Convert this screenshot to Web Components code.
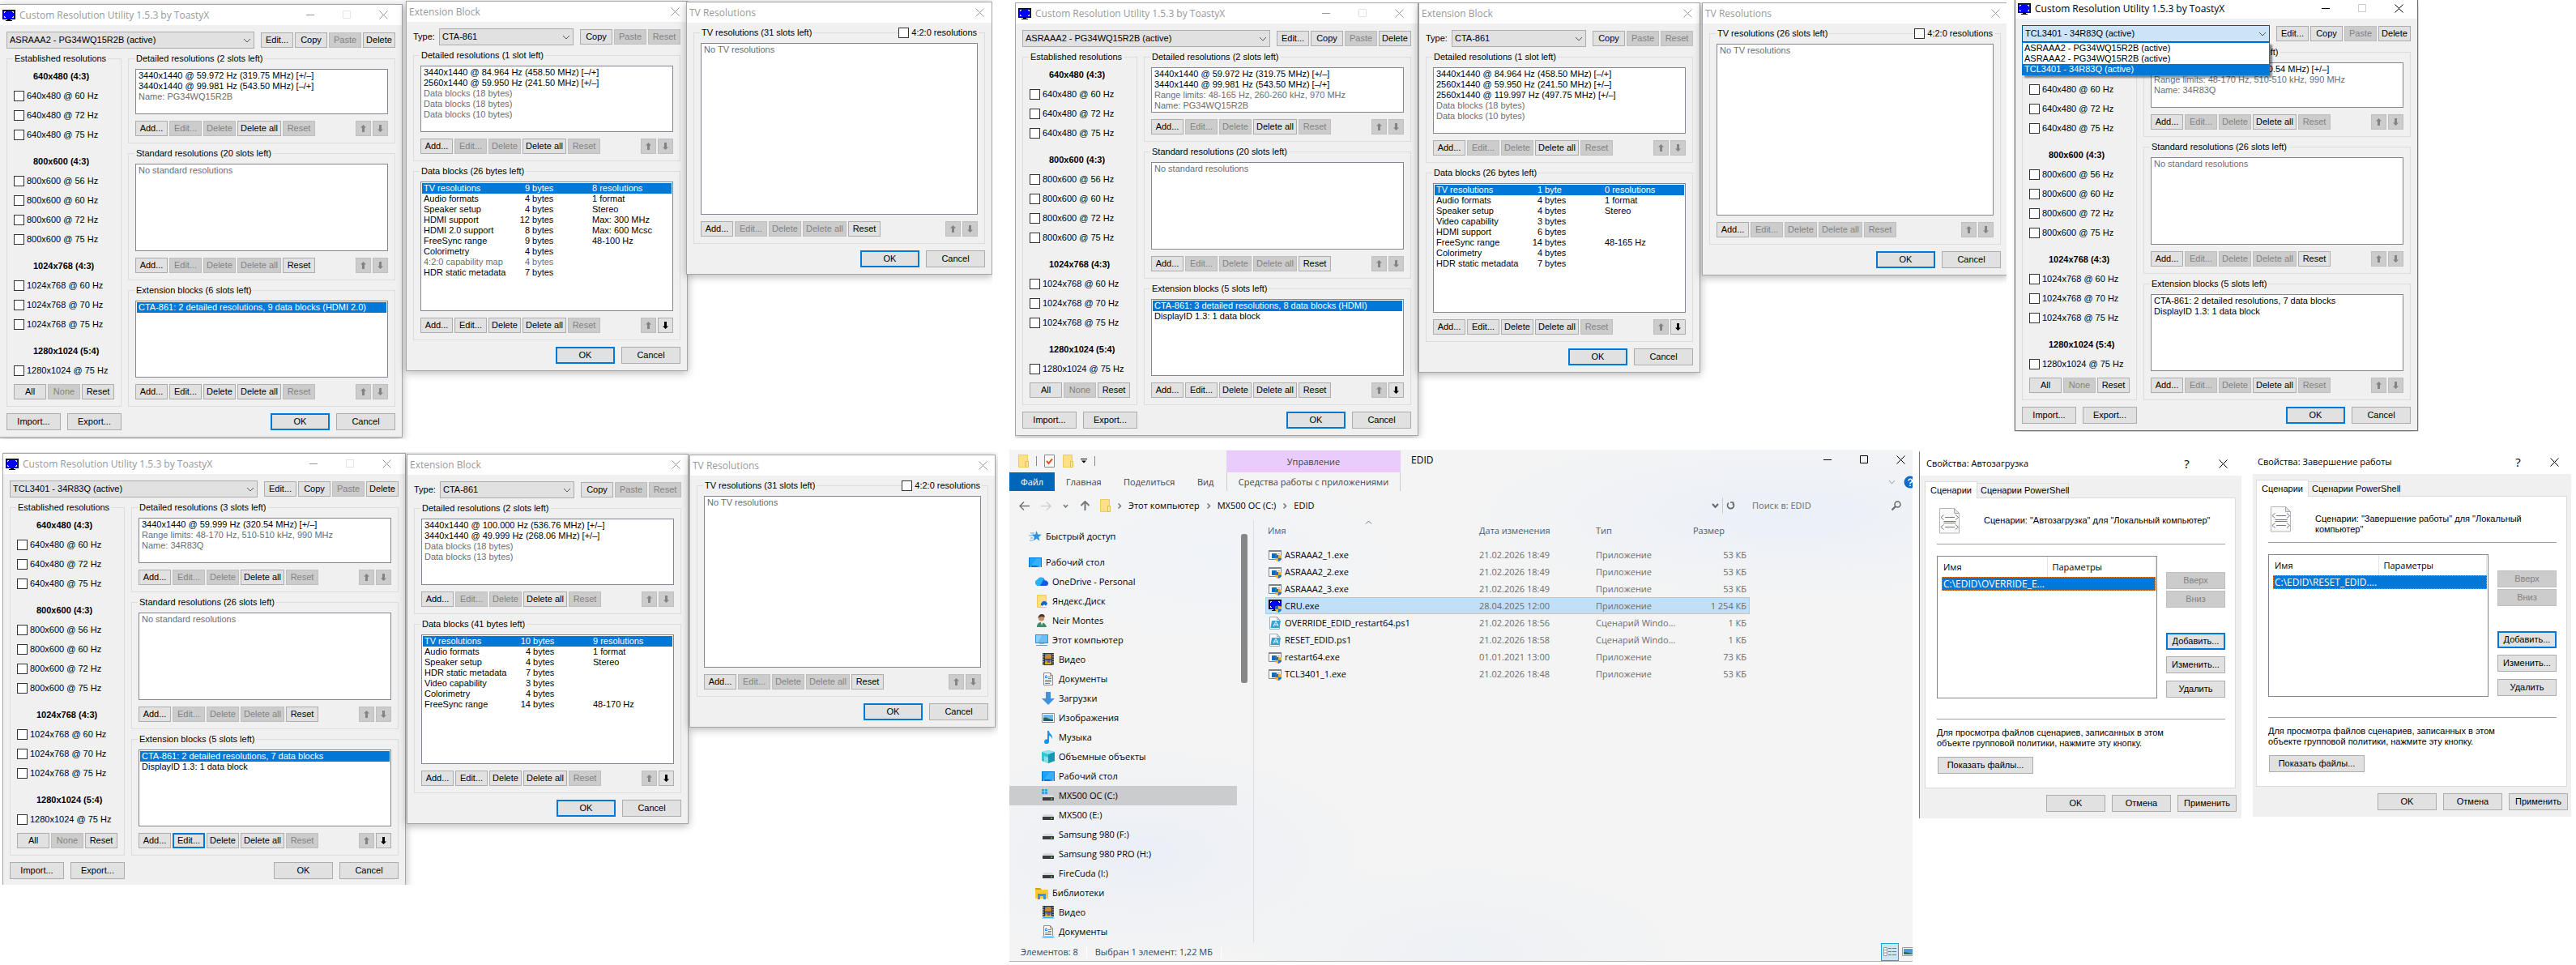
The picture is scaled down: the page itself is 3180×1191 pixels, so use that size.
<!DOCTYPE html>
<html lang="ru">
<head>
<meta charset="utf-8">
<title>CRU / EDID</title>
<style>
  html, body { margin: 0; height: 100%; background: #fff; }
  body { font: 11px/13px "Liberation Sans", sans-serif; color: #000; }
</style>
</head>
<body>
<desk-top></desk-top>
<script>
const BASE = `
  *, *::before, *::after { box-sizing: border-box; }
  svg { display: block; flex: none; }
  button, input, select { font: inherit; color: inherit; margin: 0; }
`;
const UI = '"Open Sans", "Noto Sans", sans-serif';

const define = (name, render) => customElements.define(name, class extends HTMLElement {
  connectedCallback() {
    if (this.shadowRoot) return;
    const root = this.attachShadow({ mode: 'open' });
    const t = document.createElement('template');
    const get = (k, d = '') => this.getAttribute(k) ?? d;
    t.innerHTML = render(get, this).replace('<style>', '<style>' + BASE);
    root.append(t.content.cloneNode(true));
  }
});

/* ---------- icons ---------- */
const svg = (w, h, body, extra = '') => `<svg width="${w}" height="${h}" viewBox="0 0 ${w} ${h}" ${extra} aria-hidden="true">${body}</svg>`;
const shield = `<path d="M12 7.500l4 1.200v3c0 2.200-1.800 3.600-4 4.300-2.200-.7-4-2.100-4-4.300v-3z" fill="#f5b32c"/><path d="M12 7.500v4.300H8V8.700zM12 11.800h4c-.1 2.100-1.900 3.500-4 4.200z" fill="#1b6ec2"/>`;
const monitor = `<path d="M0 0h16v12H0z" fill="#000"/><path d="M1 1h14v10H1z" fill="#00f"/><path d="M2.500 4V2.500H4M12 2.500h1.500V4M2.500 8v1.500H4M12 9.500h1.500V8" fill="none" stroke="#fff"/><path d="M6 12h4v1h2v1H4v-1h2z" fill="#000"/>`;
const drive = `<path d="M3 7h10l2 3H1z" fill="#d9d9d9"/><path d="M1 10h14v4H1z" fill="#3c3c3c"/><path d="M11.500 11.500h1.500v1.500h-1.500z" fill="#3f4"/>`;
const film = `<path d="M1 0h14v15H1z" fill="#333"/><path d="M4 1h8v6H4zM4 8h8v6H4z" fill="#4a86c8"/><path d="M4 4l4-3 4 2v4H4z" fill="#c98b2d"/><path d="M4 11l5-2 3 3v2H4z" fill="#d8a62a"/><path d="M7 8h3v4H7z" fill="#7a4da0"/><path d="M2 1v14M14 1v14" stroke="#eee" stroke-width="1" stroke-dasharray="1.500 1.500"/>`;
const doc = `<path d="M2.500.5h8l3 3v12h-11z" fill="#fff" stroke="#8c8c8c"/><path d="M10.500.5v3h3" fill="none" stroke="#8c8c8c"/><path d="M4 6.500h3M8 5.500h4M8 7.500h4M4 9.500h8M4 11.500h8M4 13.500h6" stroke="#2f8fc8"/><path d="M4 6l1.500-3L7 6" fill="none" stroke="#2f8fc8"/>`;
const lib = `<path d="M1 13h14l1 3H0z" fill="#9bdcf8"/><path d="M2 14h12v1H2z" fill="#3db2ec"/>`;
const folder = `<path d="M1 0h11.500v16H1z" fill="#ffe08a"/><path d="M1.500.5h11v15h-11z" fill="none" stroke="#eccb5c"/><path d="M10.500 8.500h3v7h-3z" fill="#ffe9a6" stroke="#e3bd4a"/>`;
const desk = `<path d="M0 2h16v12H0z" fill="#0078d7"/><path d="M1 3h14v9H1z" fill="#1ba1f5"/><path d="M9 3h6v9H3z" fill="#36b0fa"/><path d="M2 13h1M11 13h1M13 13h2" stroke="#fff"/>`;
const ICONS = {
  cru: svg(16, 14, monitor),
  folder: svg(14, 16, folder),
  star: svg(16, 16, `<path d="M9.500 1l1.700 4.500 4.800.3-3.800 3 1.300 4.700-4-2.700-4 2.700 1.400-4.700L3.500 5.800l4.600-.3z" fill="#2a94e0"/><path d="M2 4h5M0 7h5M2 10h3M1 13h4" stroke="#5cb0ea"/>`),
  desk: svg(16, 16, desk),
  cloud: svg(16, 16, `<path d="M4 13a4 4 0 0 1-1-7.800A5 5 0 0 1 12 6z" fill="#1379e0"/><path d="M3 5.200A5 5 0 0 1 11 4L5 13H4a4 4 0 0 1-1-7.800z" fill="#27b3f7"/><path d="M5 13l5-6a3.800 3.800 0 0 1 6 3 3 3 0 0 1-3 3z" fill="#1457e6"/>`),
  yandex: svg(16, 16, `<path d="M2.500.5h11v15h-11z" fill="#ffdf84" stroke="#eccb5c"/><path d="M7 15V9h8v6z" fill="#fff"/><path d="M7 13a4 4 0 0 1 8-2l-2 3c-1-2-3-2-4 0z" fill="#1466d6"/>`),
  user: svg(16, 16, `<path d="M2 16c0-4 2-6 5-6s6 2 7 6z" fill="#3f8a6b"/><path d="M7 10l1 4 1.500-4z" fill="#fff"/><circle cx="7.500" cy="5" r="3.600" fill="#c98f67"/><path d="M3.500 5c0-3 2-5 4.500-5 3 0 4 2 3.500 4-2-1-4-1.500-6-.5z" fill="#4a3527"/>`),
  pc: svg(16, 16, `<path d="M0 1h16v11H0z" fill="#2d8fd8"/><path d="M1 2h14v9H1z" fill="#8bd0fa"/><path d="M8 2h7v9H3z" fill="#6abff5"/><path d="M5 12h6v1H5z" fill="#8ba"/><path d="M1 14.500h14" stroke="#7d95a8"/>`),
  video: svg(16, 16, film),
  videolib: svg(16, 16, film + lib),
  doc: svg(16, 16, doc),
  doclib: svg(16, 16, doc + lib),
  down: svg(16, 16, `<path d="M5 0h6v8h5l-8 8-8-8h5z" fill="#3c93e0"/>`),
  pic: svg(16, 16, `<path d="M.5 2.500h15v11H.5z" fill="#fff" stroke="#8c8c8c"/><path d="M2 4h12v8H2z" fill="#6cb8ea"/><path d="M2 8c4-2 6 2 12 2v2H2z" fill="#2a5a66"/>`),
  music: svg(16, 16, `<path d="M7 0h2c0 4 5 4 4 10-1-3-2-3.500-4-4v7a3 3 0 1 1-2-2.500z" fill="#1a94ea"/>`),
  cube: svg(16, 16, `<path d="M0 2l8-2 8 2v11l-8 3-8-3z" fill="#37c4d4"/><path d="M8 5l8-3v11l-8 3z" fill="#1597ad"/><path d="M0 2l8-2 8 2-8 3z" fill="#8be6ee"/><path d="M3 7l5 2v7l-5-2z" fill="#8edfe8"/>`),
  drive: svg(16, 16, drive),
  drivewin: svg(16, 16, drive + `<path d="M0 0h3v2.500H0zM3.800 0H7v2.500H3.800zM0 3.300h3V6H0zM3.800 3.300H7V6H3.800z" fill="#18a7ee"/>`),
  libs: svg(16, 16, `<path d="M0 2h6l2 2h8v11H0z" fill="#ffc83d"/><path d="M0 2h6l2 2H0z" fill="#e09b12"/><path d="M3 9h10v7h-3v-4H6v4H3z" fill="#3c93e0"/>`),
  exe: svg(16, 16, `<path d="M.5 2.500h15v11H.5z" fill="#fff" stroke="#7d858c"/><path d="M0 2h16v2H0z" fill="#7d858c"/><path d="M4 6h6v6H4z" fill="#0c6cc4"/><path d="M11 6.500h3M11 8.500h3" stroke="#9aa"/>${shield}`),
  cruexe: svg(16, 16, monitor + shield),
  ps1: svg(16, 16, `<path d="M1.500.5h9l3 3v12h-12z" fill="#fbfdff" stroke="#9fb0bd"/><path d="M10.500.5v3h3" fill="none" stroke="#9fb0bd"/><path d="M4 5h11l-1.500 9h-11z" fill="#3aa3d6"/><path d="M6 12l3-6 3 6M6.500 10h5" fill="none" stroke="#e6f7ff"/>`),
  task: svg(13, 16, `<path d="M.5.500h12v15H.5z" fill="#fff" stroke="#8a8a8a"/><path d="M3 8l2.500 3L10 5.500" fill="none" stroke="#e2521c" stroke-width="2"/>`),
};
const chevron = (w, h, c, sw = 1) => svg(w, h, `<path d="M1 1l${w / 2 - 1} ${h - 2}L${w - 1} 1" fill="none" stroke="${c}" stroke-width="${sw}"/>`);
const cross = c => svg(11, 11, `<path d="M.5.500l10 10M10.500.500l-10 10" stroke="${c}"/>`);
const dash = c => svg(11, 11, `<path d="M0 5.500h10" stroke="${c}"/>`);
const square = c => svg(11, 11, `<path d="M.5.500h9v9h-9z" fill="none" stroke="${c}"/>`);
const arrow = dir => svg(7, 9, `<path d="${dir === 'up' ? 'M3.500 0L7 3.500H5V9H2V3.500H0z' : 'M3.500 9L7 5.500H5V0H2v5.500H0z'}" fill="currentColor"/>`);

/* ---------- controls ---------- */
define('push-button', (a, el) => `
<style>
  :host { display: block; width: ${a('w', '40')}px; }
  button { display: grid; place-items: center; width: 100%; height: ${a('h', '19')}px; padding: 0;
    border: 1px solid #adadad; background: #e1e1e1; color: #000; white-space: nowrap; }
  button:disabled { border-color: #bfbfbf; background: #ccc; color: #838383; }
  button.focus { border: 2px solid #0078d7; }
</style>
<button type="button" ${el.hasAttribute('off') ? 'disabled' : ''} ${el.hasAttribute('focus') ? 'class="focus"' : ''} ${a('arrow') ? `aria-label="${a('arrow')}"` : ''}>${a('arrow') ? arrow(a('arrow')) : '<slot></slot>'}</button>`);

/* A leading "-" disables a button, "*" gives it the focus ring. */
const btns = (spec, h = 19, w = 40) => spec.split(',').map(s => {
  const off = s[0] === '-', focus = s[0] === '*';
  const t = off || focus ? s.slice(1) : s;
  const dir = t === '^' ? 'up' : t === 'v' ? 'down' : '';
  return `<push-button h="${h}" w="${dir ? 19 : t === 'Delete all' ? 54 : w}" ${off ? 'off' : ''} ${focus ? 'focus' : ''} ${dir ? `arrow="${dir}"` : ''}>${dir ? '' : t}</push-button>`;
}).join('');

define('tool-row', a => `
<style>:host { display: flex; justify-content: space-between; } div { display: flex; gap: 2px; }</style>
<div>${btns(a('left'))}</div><div>${a('right') ? btns(a('right')) : ''}</div>`);

define('check-box', a => `
<style>
  :host { display: block; }
  label { display: flex; align-items: center; gap: 3px; white-space: nowrap; }
  input { appearance: none; width: 13px; height: 13px; border: 1px solid #333; background: #fff; }
</style>
<label><input type="checkbox"><span><slot></slot></span></label>`);

define('combo-box', (a, el) => {
  const open = el.hasAttribute('open');
  const opts = a('options', a('value')).split('|');
  return `
<style>
  :host { display: block; position: relative; z-index: ${open ? 5 : 'auto'}; }
  .box { display: grid; align-items: center; }
  .box > * { grid-area: 1 / 1; }
  select { appearance: none; width: 100%; height: 21px; padding: 0 20px 0 3px; border: 1px solid ${open ? '#005499' : '#adadad'};
    border-radius: 0; background: ${open ? '#cce4f7' : '#e1e1e1'}; color: #000; }
  svg { justify-self: end; margin-right: 4px; pointer-events: none; }
  ul { position: absolute; top: 21px; left: 0; right: 0; margin: 0; padding: 0; list-style: none; border: 1px solid #0078d7;
    background: #fff; box-shadow: 3px 3px 2px rgba(0,0,0,.45); }
  li { padding: 0 2px; }
  li.on { background: #0078d7; color: #fff; }
</style>
<div class="box"><select aria-label="${a('label')}"><option>${a('value')}</option></select>${chevron(10, 6, '#555')}</div>
${open ? `<ul role="listbox">${opts.map((o, i) => `<li role="option" class="${i === opts.length - 1 ? 'on' : ''}">${o}</li>`).join('')}</ul>` : ''}`;
});

define('group-box', (a, el) => `
<style>
  :host { display: block; }
  fieldset { height: 100%; min-width: 0; margin: 0; padding: ${a('pad', '6')}px 8px 8px; border: 1px solid #dcdcdc; }
  legend { margin-left: -1px; padding: 0 2px; white-space: nowrap; visibility: ${el.hasAttribute('covered') ? 'hidden' : 'visible'}; }
  .in { display: flex; flex-direction: column; gap: 8px; }
</style>
<fieldset><legend>${a('caption')}</legend><div class="in"><slot></slot></div></fieldset>`);

/* Rows: "~" greys a row, ">" selects it. Columns are split by "/|". */
define('list-box', a => {
  const rows = a('rows').split(';;');
  const cls = r => r[0] === '~' ? 'dim' : r[0] === '>' ? 'on' : '';
  const txt = r => /^[~>]/.test(r) ? r.slice(1) : r;
  const data = rows[0].includes('/|');
  const body = data
    ? `<table><colgroup><col class="c1"><col class="c2"><col></colgroup>${rows.map(r => {
        const [n, b, v] = txt(r).split('/|');
        const [num, unit] = b.split(' ');
        return `<tr class="${cls(r)}"><td>${n}</td><td><span class="n">${num}</span> ${unit}</td><td>${v || ''}</td></tr>`;
      }).join('')}</table>`
    : `<ul role="listbox">${rows.map(r => `<li role="option" class="${cls(r)}">${txt(r)}</li>`).join('')}</ul>`;
  return `
<style>
  :host { display: block; height: ${a('h')}px; padding: 1px; border: 1px solid #828790; background: #fff; }
  ul { margin: 0; padding: 0; list-style: none; }
  li { height: 13px; padding: 0 2px; white-space: nowrap; }
  table { width: 100%; table-layout: fixed; border-collapse: collapse; }
  td { height: 13px; padding: 0 2px; white-space: nowrap; }
  .c1 { width: 117px; } .c2 { width: 91px; }
  .n { display: inline-block; min-width: 14px; text-align: right; }
  .dim { color: #6d6d6d; }
  .on { background: #0078d7; color: #fff; }
</style>${body}`;
});

define('win-frame', (a, el) => {
  const active = el.hasAttribute('active'), c = active ? '#000' : '#999', full = a('kind') === 'main';
  return `
<style>
  :host { display: block; position: absolute; border: 1px solid ${active ? '#6f6f6f' : '#a5a5a5'}; background: #f0f0f0;
    box-shadow: 0 2px 10px rgba(0,0,0,.3); }
  header { display: flex; align-items: center; height: 25px; padding-left: 3px; background: #fff; color: ${c};
    font: 12px/16px ${UI}; }
  header > svg { margin-right: 5px; }
  h1 { flex: 1; margin: 0; font: inherit; white-space: nowrap; }
  header button { display: grid; place-items: center; width: ${full ? 45 : 29}px; height: 25px; padding: 0; border: 0; background: none; }
  .body { display: flex; flex-direction: column; gap: 8px; padding: ${a('top', '8')}px 8px 8px; }
</style>
<header>${full ? ICONS.cru : ''}<h1>${a('caption')}</h1>
${full ? `<button aria-label="Minimize">${dash(c)}</button><button aria-label="Maximize">${square(active ? '#ccc' : '#e4e4e4')}</button>` : ''}<button aria-label="Close">${cross(c)}</button></header>
<div class="body"><slot></slot></div>`;
});

/* ---------- application windows ---------- */
const GROUPS = [['640x480 (4:3)', ['640x480 @ 60 Hz', '640x480 @ 72 Hz', '640x480 @ 75 Hz']],
  ['800x600 (4:3)', ['800x600 @ 56 Hz', '800x600 @ 60 Hz', '800x600 @ 72 Hz', '800x600 @ 75 Hz']],
  ['1024x768 (4:3)', ['1024x768 @ 60 Hz', '1024x768 @ 70 Hz', '1024x768 @ 75 Hz']],
  ['1280x1024 (5:4)', ['1280x1024 @ 75 Hz']]];

define('cru-main', (a, el) => `
<style>
  :host { position: absolute; width: 498px; }
  win-frame { width: 100%; }
  .top { display: flex; align-items: center; gap: 8px; }
  .top combo-box { flex: 1; }
  .set { display: flex; gap: 2px; }
  .cols { display: grid; grid-template-columns: 142px 1fr; column-gap: 8px; margin-top: -2px; }
  .right { display: flex; flex-direction: column; gap: 6px; }
  .grp { display: grid; grid-auto-rows: 24px; align-items: center; }
  .grp + .grp { margin-top: 1px; }
  h2 { margin: 0 0 0 24px; font: bold 11px/13px "Liberation Sans", sans-serif; }
  .covered h2 { visibility: hidden; }
  .est { margin-top: -3px; }
  .end { display: flex; justify-content: space-between; }
  .end div { display: flex; gap: 8px; }
</style>
<win-frame kind="main" caption="Custom Resolution Utility 1.5.3 by ToastyX" ${el.hasAttribute('active') ? 'active' : ''}>
  <div class="top"><combo-box label="Display" value="${a('display')}" ${a('options') ? `open options="${a('options')}"` : ''}></combo-box><div class="set">${btns('Edit...,Copy,-Paste,Delete')}</div></div>
  <div class="cols">
    <group-box caption="Established resolutions" pad="3" ${a('options') ? 'covered' : ''}>
      ${GROUPS.map(([h, l], i) => `<div class="grp ${a('options') && !i ? 'covered' : ''}"><h2>${h}</h2>${l.map(x => `<check-box>${x}</check-box>`).join('')}</div>`).join('')}
      <tool-row class="est" left="All,-None,Reset"></tool-row>
    </group-box>
    <div class="right">
      <group-box caption="Detailed resolutions (${a('dslots')})"><list-box h="56" rows="${a('detailed')}"></list-box><tool-row left="Add...,-Edit...,-Delete,Delete all,-Reset" right="-^,-v"></tool-row></group-box>
      <group-box caption="Standard resolutions (${a('sslots')})"><list-box h="108" rows="~No standard resolutions"></list-box><tool-row left="Add...,-Edit...,-Delete,-Delete all,Reset" right="-^,-v"></tool-row></group-box>
      <group-box caption="Extension blocks (${a('eslots')})"><list-box h="95" rows="${a('ext')}"></list-box><tool-row left="${a('ebtn')}" right="${a('earr')}"></tool-row></group-box>
    </div>
  </div>
  <div class="end"><div>${btns('Import...,Export...', 21, 67)}</div><div>${btns(a('ok', '*OK') + ',Cancel', 21, 73)}</div></div>
</win-frame>`);

define('cru-extension', a => `
<style>
  :host { position: absolute; width: 348px; }
  win-frame { width: 100%; }
  .top { display: flex; align-items: center; }
  .top span { width: 32px; }
  .top combo-box { flex: 1; margin-right: 8px; }
  .set { display: flex; gap: 2px; }
  .stack { display: flex; flex-direction: column; gap: 6px; margin-top: -2px; }
  .end { display: flex; justify-content: flex-end; gap: 8px; }
</style>
<win-frame caption="Extension Block">
  <div class="top"><span>Type:</span><combo-box label="Type" value="CTA-861"></combo-box><div class="set">${btns('Copy,-Paste,-Reset')}</div></div>
  <div class="stack">
    <group-box caption="Detailed resolutions (${a('dslots')})"><list-box h="82" rows="${a('detailed')}"></list-box><tool-row left="Add...,-Edit...,-Delete,Delete all,-Reset" right="-^,-v"></tool-row></group-box>
    <group-box caption="Data blocks (${a('bytes')} bytes left)"><list-box h="160" rows="${a('data')}"></list-box><tool-row left="Add...,Edit...,Delete,Delete all,-Reset" right="-^,v"></tool-row></group-box>
  </div>
  <div class="end">${btns('*OK,Cancel', 21, 73)}</div>
</win-frame>`);

define('cru-tv', a => `
<style>
  :host { position: absolute; width: 378px; }
  win-frame { width: 100%; }
  .g { position: relative; }
  check-box { position: absolute; top: 0; right: 8px; padding-right: 2px; background: #f0f0f0; }
  .end { display: flex; justify-content: flex-end; gap: 8px; }
</style>
<win-frame caption="TV Resolutions" top="6">
  <div class="g"><group-box caption="TV resolutions (${a('slots')} slots left)"><list-box h="212" rows="~No TV resolutions"></list-box><tool-row left="Add...,-Edit...,-Delete,-Delete all,${a('reset')}" right="-^,-v"></tool-row></group-box>
  <check-box>4:2:0 resolutions</check-box></div>
  <div class="end">${btns('*OK,Cancel', 21, 73)}</div>
</win-frame>`);

/* ---------- file explorer ---------- */
const TREE = [[0, 'star', 'Быстрый доступ'], [0, 'desk', 'Рабочий стол'], [1, 'cloud', 'OneDrive - Personal'], [1, 'yandex', 'Яндекс.Диск'],
  [1, 'user', 'Neir Montes'], [1, 'pc', 'Этот компьютер'], [2, 'video', 'Видео'], [2, 'doc', 'Документы'], [2, 'down', 'Загрузки'],
  [2, 'pic', 'Изображения'], [2, 'music', 'Музыка'], [2, 'cube', 'Объемные объекты'], [2, 'desk', 'Рабочий стол'],
  [2, 'drivewin', 'MX500 ОС (C:)', 'on'], [2, 'drive', 'MX500 (E:)'], [2, 'drive', 'Samsung 980 (F:)'], [2, 'drive', 'Samsung 980 PRO (H:)'],
  [2, 'drive', 'FireCuda (I:)'], [1, 'libs', 'Библиотеки'], [2, 'videolib', 'Видео'], [2, 'doclib', 'Документы']];
define('explorer-tree', () => `
<style>
  :host { display: flex; width: 301px; flex: none; overflow: hidden; }
  ul { flex: 1; margin: 0; padding: 8px 0 0; list-style: none; }
  a { display: flex; align-items: center; gap: 5px; height: 24px; color: #000; text-decoration: none; white-space: nowrap; }
  .l0 { padding-left: 24px; } .l1 { padding-left: 32px; } .l2 { padding-left: 40px; }
  li:first-child { margin-bottom: 8px; }
  .on { background: #cbcccd; }
  .bar { width: 20px; padding: 17px 7px 0 5px; }
  .bar div { height: 184px; border-radius: 3px; background: #868686; }
</style>
<ul>${TREE.map(([l, i, t, on]) => `<li><a href="#" class="l${l} ${on || ''}">${ICONS[i]}<span>${t}</span></a></li>`).join('')}</ul>
<div class="bar"><div></div></div>`);

const FILES = [['exe', 'ASRAAA2_1.exe', '21.02.2026 18:49', 'Приложение', '53 КБ'], ['exe', 'ASRAAA2_2.exe', '21.02.2026 18:49', 'Приложение', '53 КБ'],
  ['exe', 'ASRAAA2_3.exe', '21.02.2026 18:49', 'Приложение', '53 КБ'], ['cruexe', 'CRU.exe', '28.04.2025 12:00', 'Приложение', '1 254 КБ'],
  ['ps1', 'OVERRIDE_EDID_restart64.ps1', '21.02.2026 18:56', 'Сценарий Windo...', '1 КБ'], ['ps1', 'RESET_EDID.ps1', '21.02.2026 18:58', 'Сценарий Windo...', '1 КБ'],
  ['exe', 'restart64.exe', '01.01.2021 13:00', 'Приложение', '73 КБ'], ['exe', 'TCL3401_1.exe', '21.02.2026 18:48', 'Приложение', '53 КБ']];
define('explorer-files', () => `
<style>
  :host { display: block; flex: 1; padding-left: 14px; border-left: 1px solid #dcdde0; }
  table { width: 598px; table-layout: fixed; border-collapse: collapse; color: #6d6d6d; }
  th { height: 32px; padding: 0 3px; text-align: left; vertical-align: top; font-weight: 400; line-height: 26px; color: #4c607a; position: relative; }
  th svg { position: absolute; left: 123px; top: 0; }
  td { height: 21px; padding: 0; white-space: nowrap; }
  td:first-child { padding-left: 4px; color: #000; }
  td:last-child { padding-right: 4px; text-align: right; }
  th:not(:first-child) { padding-left: 0; }
  td div { display: flex; align-items: center; gap: 4px; }
  .on { background: #c3dff5; outline: 1px solid #99d1ff; outline-offset: -1px; }
  .a { width: 264px; } .b { width: 144px; } .c { width: 120px; }
</style>
<table><colgroup><col class="a"><col class="b"><col class="c"><col></colgroup>
<thead><tr><th>Имя${svg(9, 5, '<path d="M1 4.500L4.500 1 8 4.500" fill="none" stroke="#777"/>')}</th><th>Дата изменения</th><th>Тип</th><th>Размер</th></tr></thead>
<tbody>${FILES.map(f => `<tr class="${f[0] === 'cruexe' ? 'on' : ''}"><td><div>${ICONS[f[0]]}<span>${f[1]}</span></div></td><td>${f[2]}</td><td>${f[3]}</td><td>${f[4]}</td></tr>`).join('')}</tbody></table>`);

const crumbSep = svg(6, 9, '<path d="M1.500 1.500l3 3-3 3" fill="none" stroke="#777" stroke-width="1.500"/>');
define('file-explorer', () => `
<style>
  :host { display: flex; flex-direction: column; position: absolute; width: 1115px; height: 632px; overflow: hidden;
    font: 11px/16px ${UI}; border-bottom: 1px solid #b5b5b5;
    background: radial-gradient(ellipse 420px 110px at 960px 80px, #ebf0f8, transparent), radial-gradient(ellipse 300px 140px at 160px 500px, #ebeff6, transparent),
      radial-gradient(ellipse 260px 120px at 250px 130px, #f0f3f8, transparent), radial-gradient(ellipse 300px 120px at 560px 620px, #eef1f5, transparent), #f4f4f4; }
  button { display: grid; place-items: center; padding: 0; border: 0; background: none; }
  .title { display: flex; height: 28px; margin-right: -8px; }
  .quick { display: flex; align-items: center; gap: 9px; width: 268px; padding-left: 10px; }
  .quick i { width: 1px; height: 12px; background: #888; }
  .ctx { width: 215px; margin-top: 1px; background: #e9ccfc; color: #444; text-align: center; line-height: 27px; }
  .title h1 { flex: 1; margin: 0; padding-left: 13px; font: 12px/25px ${UI}; }
  .title .w { width: 45px; height: 25px; }
  .tabs { display: flex; height: 23px; line-height: 23px; color: #444; white-space: nowrap; }
  .tabs a { color: inherit; text-decoration: none; }
  .file { width: 56px; margin-right: 14px; background: #0067b8; text-align: center; }
  .tabs .file { color: #fff; }
  .t2 { width: 71px; } .t3 { width: 91px; } .t4 { width: 36px; }
  .t5 { width: 215px; text-align: center; border: solid #ccc; border-width: 0 1px; }
  .rest { display: flex; flex: 1; justify-content: flex-end; align-items: center; gap: 10px; }
  .q { width: 11px; height: 16px; overflow: hidden; }
  .addr { display: flex; align-items: center; height: 36px; padding-left: 12px; white-space: nowrap; }
  .nav { display: flex; align-items: center; width: 88px; justify-content: space-between; margin-right: 11px; }
  .crumbs { display: flex; align-items: center; gap: 8px; flex: 1; }
  .crumbs a { color: #000; text-decoration: none; }
  .go { display: flex; align-items: center; gap: 4px; width: 50px; }
  .go i { width: 1px; height: 20px; background: #ccc; }
  .search { display: flex; align-items: center; width: 198px; padding-right: 14px; }
  .search input { flex: 1; min-width: 0; padding: 0; border: 0; background: none; outline: 0; }
  .search input::placeholder { color: #6d6d6d; }
  .main { display: flex; flex: 1; min-height: 0; }
  .status { display: flex; align-items: center; height: 23px; padding-left: 14px; color: #2d4669; }
  .status span { padding-right: 10px; margin-right: 10px; border-right: 1px solid #fff; }
  .view { display: flex; gap: 4px; margin-left: auto; align-items: center; }
  .view b { display: grid; place-items: center; width: 22px; height: 22px; border: 1px solid #26a0da; background: #cbe5f3; }
</style>
<div class="title"><div class="quick">${ICONS.folder}<i></i>${ICONS.task}${ICONS.folder}${svg(8, 6, '<path d="M0 .5h8" stroke="#000"/><path d="M1 2.500h6L4 5.500z"/>')}<i></i></div>
  <div class="ctx">Управление</div><h1>EDID</h1>
  <button class="w" aria-label="Свернуть">${dash('#000')}</button><button class="w" aria-label="Развернуть">${square('#000')}</button><button class="w" aria-label="Закрыть">${cross('#000')}</button></div>
<nav class="tabs"><a class="file" href="#">Файл</a><a class="t2" href="#">Главная</a><a class="t3" href="#">Поделиться</a><a class="t4" href="#">Вид</a><a class="t5" href="#">Средства работы с приложениями</a>
  <div class="rest">${chevron(9, 6, '#999')}<div class="q">${svg(16, 16, '<circle cx="8" cy="8" r="7.500" fill="#0f6cc9"/><path d="M6 6.500a2.200 2.200 0 1 1 3 2c-.8.300-1 .7-1 1.500M8 11.500v1.500" fill="none" stroke="#fff" stroke-width="1.600"/>')}</div></div></nav>
<div class="addr"><div class="nav">
  <button aria-label="Назад">${svg(13, 11, '<path d="M6 .5l-5 5 5 5M1 5.500h12" fill="none" stroke="#767676" stroke-width="1.500"/>')}</button>
  <button aria-label="Вперёд">${svg(13, 11, '<path d="M7 .5l5 5-5 5M12 5.500H0" fill="none" stroke="#d0d0d0" stroke-width="1.500"/>')}</button>
  <button aria-label="Недавние">${chevron(7, 5, '#777', 1.5)}</button>
  <button aria-label="Вверх">${svg(13, 12, '<path d="M1.500 6l5-5 5 5M6.500 1v11" fill="none" stroke="#777" stroke-width="2"/>')}</button></div>
  <div class="crumbs">${ICONS.folder}${crumbSep}<a href="#">Этот компьютер</a>${crumbSep}<a href="#">MX500 ОС (C:)</a>${crumbSep}<a href="#">EDID</a></div>
  <div class="go"><button aria-label="История">${chevron(9, 6, '#666', 2)}</button><i></i><button aria-label="Обновить">${svg(11, 12, '<path d="M3 2.500a4 4 0 1 0 5 0M8.500 5.500v-3.500h-3.500" fill="none" stroke="#666" stroke-width="1.600"/>')}</button></div>
  <div class="search"><input aria-label="Поиск" placeholder="Поиск в: EDID">${svg(12, 12, '<circle cx="7.500" cy="4.500" r="3.500" fill="none" stroke="#666" stroke-width="1.500"/><path d="M5 7L.5 11.500" stroke="#666" stroke-width="2"/>')}</div></div>
<div class="main"><explorer-tree></explorer-tree><explorer-files></explorer-files></div>
<div class="status"><span>Элементов: 8</span><span>Выбран 1 элемент: 1,22 МБ</span>
  <div class="view"><b>${svg(16, 11, '<path d="M.5.500h4v10h-4zM.5 3.500h4M.5 7h4" fill="#fff" stroke="#999"/><path d="M6 1.500h4M11 1.500h5M6 5.500h4M11 5.500h5M6 9.500h4M11 9.500h5" stroke="#777"/>')}</b>
  ${svg(13, 11, '<path d="M.5.500h16v10H.5z" fill="#fff" stroke="#999"/><path d="M2 2h11v7H2z" fill="#4b9be0"/><path d="M2 6c4 0 6 1 11 2v1H2z" fill="#2e6a54"/>')}</div></div>`);

/* ---------- script properties ---------- */
define('script-props', a => `
<style>
  :host { display: block; position: absolute; width: 398px; border-left: 1px solid #777; background: #f0f0f0; }
  header { display: flex; align-items: center; height: 30px; padding-left: 8px; background: #fff; font: 11px/16px ${UI}; }
  h1 { flex: 1; margin: 0; font: inherit; }
  header button { display: grid; place-items: center; width: 45px; padding: 0; border: 0; background: none; font-size: 15px; }
  .body { padding: 7px 6px 8px; }
  .tabs { display: flex; align-items: flex-end; height: 20px; }
  .tabs button { height: 18px; padding: 0 4px; border: 1px solid #dcdcdc; border-width: 1px 1px 0 0; background: #f0f0f0; width: 113px; white-space: nowrap; }
  .tabs .cur { position: relative; width: 65px; height: 21px; margin-bottom: -1px; border-left-width: 1px; background: #fff; }
  .panel { width: 384px; height: 359px; padding: 12px 12px 0 14px; border: 1px solid #dcdcdc; background: #fff; }
  .head { display: flex; gap: 29px; height: 44px; padding-left: 3px; }
  .head p { margin: 9px 0 0; width: 290px; }
  hr { height: 1px; margin: 0; border: 0; background: #a0a0a0; }
  .mid { display: flex; justify-content: space-between; margin: 14px 0 25px; }
  .list { width: 272px; height: 176px; padding: 0 1px 0 5px; border: 1px solid #828790; }
  table { width: 100%; table-layout: fixed; border-collapse: collapse; font: 12px/16px ${UI}; }
  th { height: 25px; padding: 0 6px; border-right: 1px solid #e5e5e5; text-align: left; font-weight: 400; font-size: 11px; }
  th:first-child { width: 130px; padding: 0 2px; }
  td { height: 17px; padding: 0 2px; white-space: nowrap; }
  tbody tr { background: #0078d7; color: #fff; outline: 1px dotted #f08030; outline-offset: -1px; }
  .side { display: flex; flex-direction: column; padding-top: 20px; }
  .side push-button:nth-child(2) { margin: 2px 0 31px; }
  .side push-button:nth-child(4) { margin: 8px 0 9px; }
  .note { margin: 10px 0; width: 300px; }
  .show { margin-left: 1px; }
  .end { display: flex; justify-content: flex-end; gap: 8px; padding-top: 8px; }
</style>
<header><h1>${a('caption')}</h1><button aria-label="Справка">?</button><button aria-label="Закрыть">${cross('#000')}</button></header>
<div class="body">
  <div class="tabs"><button class="cur">Сценарии</button><button>Сценарии PowerShell</button></div>
  <div class="panel">
    <div class="head">${svg(26, 32, '<path d="M.5.500h18l6 6v24.500H.5z" fill="#fafafa" stroke="#b4b4b4"/><path d="M18.500.500v6h6z" fill="#e4e4e4" stroke="#a8a8a8"/><path d="M5.500 8.500l-3.500 3 3.500 3M20 8.500l3.500 3-3.500 3M7 11.500h12M5.500 16.500h15M5.500 18.500h15M5.500 20.500l-3.500 3 3.500 3M20 20.500l3.500 3-3.500 3M7 23.500h12" fill="none" stroke="#77778f"/>')}<p>${a('text')}</p></div>
    <hr>
    <div class="mid"><div class="list"><table><thead><tr><th>Имя</th><th>Параметры</th></tr></thead><tbody><tr><td>${a('file')}</td><td></td></tr></tbody></table></div>
      <div class="side">${btns('-Вверх,-Вниз,*Добавить...,Изменить...,Удалить', 21, 73)}</div></div>
    <hr>
    <p class="note">Для просмотра файлов сценариев, записанных в этом объекте групповой политики, нажмите эту кнопку.</p>
    <push-button class="show" w="118" h="21">Показать файлы...</push-button>
  </div>
  <div class="end">${btns('OK,Отмена,Применить', 21, 73)}</div>
</div>`);

/* ---------- desktop canvas ---------- */
define('desk-top', () => `
<style>
  :host { display: block; position: relative; height: 100vh; overflow: hidden; background: #fff; }
  .pane { position: absolute; overflow: hidden; }
  .a { left: 0; top: 0; width: 1225px; height: 542px; }
  .b { left: 1253px; top: 3px; width: 1224px; height: 538px; }
  .c { left: 2486px; top: 0; width: 500px; height: 533px; }
  .d { left: 3px; top: 558px; width: 1229px; height: 534px; }
  .f { left: 2369px; top: 557px; width: 398px; height: 453px; }
  .g { left: 2781px; top: 555px; width: 393px; height: 453px; }
</style>
<div class="pane a">
  <cru-main style="left:-1px;top:5px" display="ASRAAA2 - PG34WQ15R2B (active)" dslots="2 slots left" sslots="20 slots left" eslots="6 slots left"
    detailed="3440x1440 @ 59.972 Hz (319.75 MHz) [+/–];;3440x1440 @ 99.981 Hz (543.50 MHz) [–/+];;~Name: PG34WQ15R2B"
    ext="&gt;CTA-861: 2 detailed resolutions, 9 data blocks (HDMI 2.0)" ebtn="Add...,Edit...,Delete,Delete all,-Reset" earr="-^,-v"></cru-main>
  <cru-extension style="left:501px;top:1px" dslots="1 slot left" bytes="26"
    detailed="3440x1440 @ 84.964 Hz (458.50 MHz) [–/+];;2560x1440 @ 59.950 Hz (241.50 MHz) [+/–];;~Data blocks (18 bytes);;~Data blocks (18 bytes);;~Data blocks (10 bytes)"
    data="&gt;TV resolutions/|9 bytes/|8 resolutions;;Audio formats/|4 bytes/|1 format;;Speaker setup/|4 bytes/|Stereo;;HDMI support/|12 bytes/|Max: 300 MHz;;HDMI 2.0 support/|8 bytes/|Max: 600 Mcsc;;FreeSync range/|9 bytes/|48-100 Hz;;Colorimetry/|4 bytes;;~4:2:0 capability map/|4 bytes;;HDR static metadata/|7 bytes"></cru-extension>
  <cru-tv style="left:847px;top:2px" slots="31" reset="Reset"></cru-tv>
</div>
<div class="pane b">
  <cru-main style="left:0;top:0" display="ASRAAA2 - PG34WQ15R2B (active)" dslots="2 slots left" sslots="20 slots left" eslots="5 slots left"
    detailed="3440x1440 @ 59.972 Hz (319.75 MHz) [+/–];;3440x1440 @ 99.981 Hz (543.50 MHz) [–/+];;~Range limits: 48-165 Hz, 260-260 kHz, 970 MHz;;~Name: PG34WQ15R2B"
    ext="&gt;CTA-861: 3 detailed resolutions, 8 data blocks (HDMI);;DisplayID 1.3: 1 data block" ebtn="Add...,Edit...,Delete,Delete all,Reset" earr="-^,v"></cru-main>
  <cru-extension style="left:498px;top:0" dslots="1 slot left" bytes="26"
    detailed="3440x1440 @ 84.964 Hz (458.50 MHz) [–/+];;2560x1440 @ 59.950 Hz (241.50 MHz) [+/–];;2560x1440 @ 119.997 Hz (497.75 MHz) [+/–];;~Data blocks (18 bytes);;~Data blocks (10 bytes)"
    data="&gt;TV resolutions/|1 byte/|0 resolutions;;Audio formats/|4 bytes/|1 format;;Speaker setup/|4 bytes/|Stereo;;Video capability/|3 bytes;;HDMI support/|6 bytes;;FreeSync range/|14 bytes/|48-165 Hz;;Colorimetry/|4 bytes;;HDR static metadata/|7 bytes"></cru-extension>
  <cru-tv style="left:848px;top:0" slots="26" reset="-Reset"></cru-tv>
</div>
<div class="pane c">
  <cru-main active style="left:1px;top:-3px" display="TCL3401 - 34R83Q (active)" options="ASRAAA2 - PG34WQ15R2B (active)|ASRAAA2 - PG34WQ15R2B (active)|TCL3401 - 34R83Q (active)"
    dslots="3 slots left" sslots="26 slots left" eslots="5 slots left"
    detailed="3440x1440 @ 59.999 Hz (320.54 MHz) [+/–];;~Range limits: 48-170 Hz, 510-510 kHz, 990 MHz;;~Name: 34R83Q"
    ext="CTA-861: 2 detailed resolutions, 7 data blocks;;DisplayID 1.3: 1 data block" ebtn="Add...,-Edit...,-Delete,Delete all,-Reset" earr="-^,-v"></cru-main>
</div>
<div class="pane d">
  <cru-main style="left:0;top:1px" display="TCL3401 - 34R83Q (active)" dslots="3 slots left" sslots="26 slots left" eslots="5 slots left" ok="OK"
    detailed="3440x1440 @ 59.999 Hz (320.54 MHz) [+/–];;~Range limits: 48-170 Hz, 510-510 kHz, 990 MHz;;~Name: 34R83Q"
    ext="&gt;CTA-861: 2 detailed resolutions, 7 data blocks;;DisplayID 1.3: 1 data block" ebtn="Add...,*Edit...,Delete,Delete all,-Reset" earr="-^,v"></cru-main>
  <cru-extension style="left:499px;top:2px" dslots="2 slots left" bytes="41"
    detailed="3440x1440 @ 100.000 Hz (536.76 MHz) [+/–];;3440x1440 @ 49.999 Hz (268.06 MHz) [+/–];;~Data blocks (18 bytes);;~Data blocks (13 bytes)"
    data="&gt;TV resolutions/|10 bytes/|9 resolutions;;Audio formats/|4 bytes/|1 format;;Speaker setup/|4 bytes/|Stereo;;HDR static metadata/|7 bytes;;Video capability/|3 bytes;;Colorimetry/|4 bytes;;FreeSync range/|14 bytes/|48-170 Hz"></cru-extension>
  <cru-tv style="left:848px;top:3px" slots="31" reset="Reset"></cru-tv>
</div>
<file-explorer style="left:1246px;top:555px"></file-explorer>
<div class="pane f"><script-props style="left:0;top:0" caption="Свойства: Автозагрузка" text='Сценарии: "Автозагрузка" для "Локальный компьютер"' file="C:\\EDID\\OVERRIDE_E..."></script-props></div>
<div class="pane g"><script-props style="left:-3px;top:0" caption="Свойства: Завершение работы" text='Сценарии: "Завершение работы" для "Локальный компьютер"' file="C:\\EDID\\RESET_EDID...."></script-props></div>`);
</script>
</body>
</html>
